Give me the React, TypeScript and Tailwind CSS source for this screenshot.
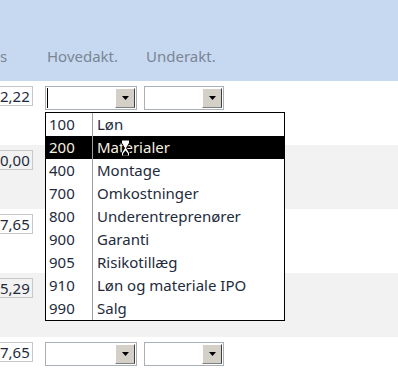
import React from 'react';

const items: [string, string][] = [
  ['100', 'Løn'],
  ['200', 'Materialer'],
  ['400', 'Montage'],
  ['700', 'Omkostninger'],
  ['800', 'Underentreprenører'],
  ['900', 'Garanti'],
  ['905', 'Risikotillæg'],
  ['910', 'Løn og materiale IPO'],
  ['990', 'Salg'],
];

const amounts = ['2,22', '0,00', '7,65', '5,29', '7,65'];

function Combo({ w, caret }: { w: string; caret?: boolean }) {
  return (
    <div className={`${w} h-[24px] border border-[#a9b0b8] bg-white flex justify-end p-[1px] relative`}>
      {caret && <div className="absolute left-[1px] top-[1px] w-[1px] h-[20px] bg-black" />}
      <div className="w-[20px] h-full bg-[#d4d0c8] border-t border-l border-t-white border-l-white border-b border-r border-b-[#808080] border-r-[#404040] flex items-center justify-center">
        <svg width="7" height="4" viewBox="0 0 7 4">
          <path d="M0 0h7L3.5 4z" fill="#000" />
        </svg>
      </div>
    </div>
  );
}

function Hourglass() {
  return (
    <svg width="11" height="22" viewBox="0 0 11 22" className="absolute left-[120px] top-[137px]">
      <rect x="0" y="0" width="11" height="3" fill="#000" />
      <rect x="0" y="19" width="11" height="3" fill="#000" />
      <path d="M1.5 3h8v3L6.5 11l3 5v3h-8v-3l3-5-3-5z" fill="#fff" stroke="#000" />
      <path d="M3 16.5l2.5-3 2.5 3v2H3z" fill="#000" />
    </svg>
  );
}

export default function App() {
  return (
    <div className="w-[398px] h-[383px] overflow-hidden relative bg-white" style={{ fontFamily: '"Noto Sans", "Open Sans", sans-serif' }}>
      <div className="h-[81px] bg-[#c6d9f0] flex pt-[46px] text-[15px] leading-[20px] text-[#7b8596]">
        <div className="w-[46px]">s</div>
        <div className="w-[99px] ml-[1px]">Hovedakt.</div>
        <div>Underakt.</div>
      </div>

      {amounts.map((a, i) => (
        <div key={i} className={`h-[64px] pt-[5px] flex items-start ${i % 2 ? 'bg-[#f2f2f2]' : 'bg-white'}`}>
          <div className={`w-[33px] h-[20px] border border-l-0 border-[#c8c8c8] text-right pr-[4px] text-[15px] leading-[18px] text-[#1e2b3c] ${i % 2 ? 'bg-[#f2f2f2]' : 'bg-white'}`}>
            {a}
          </div>
          <div className="ml-[12px] flex gap-[7px]">
            <Combo w="w-[92px]" caret={i === 0} />
            <Combo w="w-[80px]" />
          </div>
        </div>
      ))}

      <div className="absolute left-[45px] top-[112px] w-[240px] border border-black bg-white text-[15px] leading-[23px] text-[#1e2b3c]">
        {items.map(([code, name], i) => (
          <div key={code} className={`flex h-[23px] ${i === 1 ? 'bg-black text-[#f7f0e0]' : ''}`}>
            <div className="w-[47px] pl-[3px] border-r border-[#a0a0a0]">{code}</div>
            <div className="pl-[4px]">{name}</div>
          </div>
        ))}
      </div>
      <Hourglass />
    </div>
  );
}
